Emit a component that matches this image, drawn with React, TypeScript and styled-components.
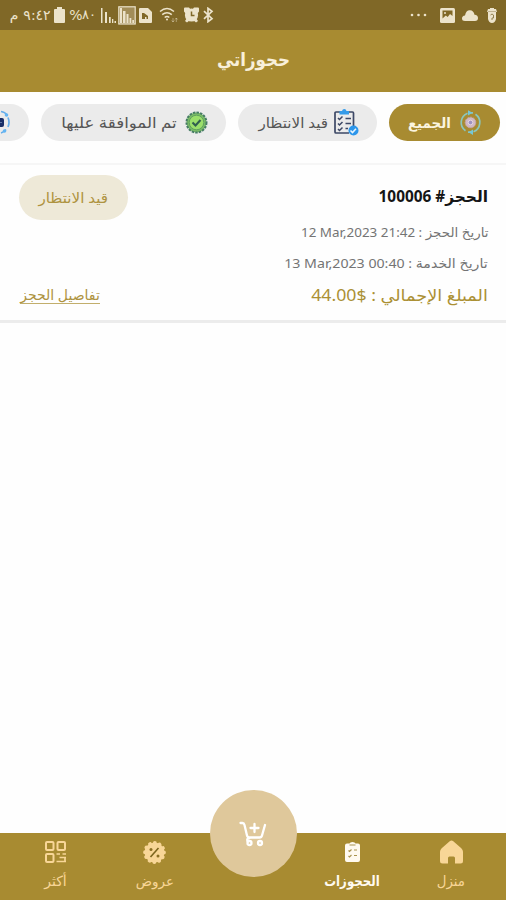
import React from "react";
import styled, { createGlobalStyle } from "styled-components";

const GlobalStyle = createGlobalStyle`
  * { box-sizing: border-box; }
  body { margin: 0; background: #fefefe; }
`;

const arabic = `"Noto Sans", "DejaVu Sans", sans-serif`;
const gold = "#a88b31";

const Screen = styled.div`
  display: flex;
  flex-direction: column;
  width: 506px;
  height: 900px;
  overflow: hidden;
  background: #fefefe;
  font-family: ${arabic};
  direction: rtl;
`;

const StatusBar = styled.header`
  display: flex;
  direction: ltr;
  justify-content: space-between;
  align-items: center;
  height: 30px;
  padding: 0 9px 0 9px;
  background: #806827;
  color: #ece3cb;
`;

const StatusGroup = styled.div`
  display: flex;
  align-items: center;
  height: 30px;
`;

const StatusItem = styled.span<{ $w: number; $gap?: number; $size?: number }>`
  display: flex;
  align-items: center;
  justify-content: center;
  flex: none;
  width: ${(p) => p.$w}px;
  margin-right: ${(p) => p.$gap ?? 0}px;
  font: ${(p) => p.$size ?? 13}px/20px "DejaVu Sans", sans-serif;
  white-space: nowrap;
`;

const TitleBar = styled.div`
  display: flex;
  justify-content: center;
  align-items: center;
  height: 62px;
  padding: 0 0 4px 2px;
  background: ${gold};
  color: #f8efda;
`;

const Label = styled.span<{ $size: number; $stretch?: number; $bold?: boolean }>`
  display: block;
  flex: none;
  white-space: nowrap;
  font-size: ${(p) => p.$size}px;
  font-weight: ${(p) => (p.$bold ? 700 : 400)};
  line-height: 1.4;
  transform: scaleX(${(p) => p.$stretch ?? 1});
  transform-origin: center;
`;

const StartLabel = styled(Label)`
  transform-origin: right center;
`;

const Filters = styled.nav`
  display: flex;
  flex: none;
  gap: 12px;
  height: 73px;
  padding: 12px 6px 0 0;
  border-bottom: 2px solid #f6f6f6;
`;

const Chip = styled.button<{ $w: number; $active?: boolean }>`
  display: flex;
  flex: none;
  align-items: center;
  justify-content: space-between;
  width: ${(p) => p.$w}px;
  height: 37px;
  padding: 0 18px;
  border: 0;
  border-radius: 19px;
  background: ${(p) => (p.$active ? gold : "#ebebeb")};
  color: ${(p) => (p.$active ? "#fbf4df" : "#565656")};
  font-family: ${arabic};
`;

const ChipText = styled.span<{ $w: number }>`
  display: flex;
  justify-content: center;
  flex: none;
  width: ${(p) => p.$w}px;
`;

const Booking = styled.article`
  display: flex;
  justify-content: space-between;
  flex: none;
  height: 158px;
  padding: 10px 18px 0 19px;
  border-bottom: 3px solid #ececec;
`;

const Details = styled.div`
  display: grid;
  grid-template-rows: 43px 29px 32px 32px;
  align-items: center;
  justify-items: start;
  color: #747474;
`;

const BookingNumber = styled(StartLabel)`
  color: #151515;
`;

const Total = styled(StartLabel)`
  color: #ab9034;
`;

const Actions = styled.div`
  display: flex;
  flex-direction: column;
  justify-content: space-between;
  align-items: flex-end;
  padding-bottom: 16px;
`;

const StateBadge = styled.div`
  display: flex;
  align-items: center;
  justify-content: center;
  width: 109px;
  height: 45px;
  border-radius: 23px;
  background: #eee9d8;
  color: #ae9340;
`;

const DetailLink = styled.a`
  display: flex;
  justify-content: center;
  align-items: center;
  width: 80px;
  height: 18px;
  margin-left: 1px;
  border-bottom: 1px solid #c2ae6c;
  color: #ae9340;
`;

const BottomBar = styled.nav`
  display: grid;
  grid-template-columns: 110px 88px 110px 87px 111px;
  height: 67px;
  margin-top: auto;
  background: ${gold};
`;

const Tab = styled.div<{ $active?: boolean }>`
  display: flex;
  flex-direction: column;
  align-items: center;
  padding-top: 7px;
  color: ${(p) => (p.$active ? "#fffaf0" : "#f8d697")};
`;

const TabIcon = styled.span`
  display: flex;
  height: 24px;
  align-items: center;
  margin-bottom: 7px;
`;

const CartButton = styled.button`
  display: flex;
  align-items: center;
  justify-content: center;
  justify-self: center;
  width: 87px;
  height: 87px;
  margin-top: -43px;
  padding: 0;
  border: 0;
  border-radius: 50%;
  background: #dfc89b;
  color: #fff;
`;

const Battery = () => (
  <svg width="11" height="16" viewBox="0 0 11 16" fill="currentColor"><path d="M3 0h5v2h2q1 0 1 1v12q0 1-1 1H1q-1 0-1-1V3q0-1 1-1h2z" /></svg>
);
const Signal = () => (
  <svg width="15" height="15" viewBox="0 0 15 15" fill="currentColor"><path d="M0 0h1.5v15H0zM4 4h2v11H4zM8 9h1.7v6H8zM11 11h1.3v4H11zM13.5 13H15v2h-1.5z" /></svg>
);
const BoxedSignal = () => (
  <svg width="18" height="19" viewBox="0 0 18 19" fill="currentColor">
    <rect x=".8" y=".8" width="16.4" height="17.2" fill="#a28d58" stroke="currentColor" strokeWidth="1.2" />
    <path d="M2 2h2v15H2zM5 5h2.5v12H5zM8.5 8h2v9h-2zM11.5 12h1.8v5h-1.8zM14.3 14H16v3h-1.7z" />
  </svg>
);
const Sim = () => (
  <svg width="13" height="15" viewBox="0 0 13 15"><path fill="currentColor" d="M1 0h8l4 4v10q0 1-1 1H1q-1 0-1-1V1q0-1 1-1z" /><path d="M3 11V5h2l4 3v3H7.500V9H6v2z" fill="#806827" /></svg>
);
const Wifi = () => (
  <svg width="20" height="16" viewBox="0 0 20 16" fill="none" stroke="currentColor" strokeWidth="1.5">
    <path d="M1 4.5q7-6 14 0M3.2 7.7q4.8-4 9.6 0M5.7 10.5q2.3-2 4.6 0" /><circle cx="8" cy="12.5" r="1" fill="currentColor" stroke="none" />
    <path d="M14 11v4m-1.3-1.5L14 15l1.3-1.5M17.3 15v-4m-1.2 1.5 1.2-1.5 1.3 1.5" strokeWidth=".7" opacity=".65" />
  </svg>
);
const Alarm = () => (
  <svg width="15" height="16" viewBox="0 0 15 16"><g fill="currentColor"><circle cx="7.5" cy="8" r="6.6" /><path d="M0 4.500V1.500Q0 .5 1 .5h4L7 3 2 7zM15 4.500V1.500Q15 .5 14 .5h-4L8 3l5 4zM1 14l2-3 3 2-3 2.500zM14 14l-2-3-3 2 3 2.500z" /></g><path d="M7.5 4.5v4H10.500" fill="none" stroke="#806827" strokeWidth="1.5" /></svg>
);
const Bluetooth = () => (
  <svg width="11" height="16" viewBox="0 0 11 16" fill="none" stroke="currentColor" strokeWidth="1.7"><path d="m1 4.2 8 7.5-4 3V1.3l4 3-8 7.5" /></svg>
);
const Dots = () => (
  <svg width="17" height="4" viewBox="0 0 17 4" fill="currentColor"><circle cx="2" cy="2" r="1.3" /><circle cx="8.5" cy="2" r="1.3" /><circle cx="15" cy="2" r="1.3" /></svg>
);
const Photo = () => (
  <svg width="15" height="15" viewBox="0 0 15 15"><rect width="15" height="15" rx="1.5" fill="currentColor" /><path d="M2.5 2.5h10V8L10 6 7.7 9 5.8 7.5l-3.3 3z" fill="#806827" /><circle cx="5" cy="5" r="1" fill="currentColor" /></svg>
);
const Cloud = () => (
  <svg width="16" height="11" viewBox="0 0 16 11" fill="currentColor"><path d="M3 11Q0 11 0 8.500Q0 6 3 5.600Q4 0 8 .2q3.500 0 4.500 4.500Q16 5 16 8q0 3-3 3z" /></svg>
);
const Shaker = () => (
  <svg width="10" height="15" viewBox="0 0 10 15"><path fill="currentColor" d="M3 0h4v1h2l1 3H9v7q-1 4-4 4t-4-4V4H0l1-3h2z" /><path d="M3.5 7q1.500-2 3 0v3H5v2" fill="none" stroke="#91804f" strokeWidth="1" /><path d="M1 3.500h8" stroke="#b5a67f" strokeWidth=".8" /></svg>
);

const CycleIcon = () => (
  <svg width="23" height="25" viewBox="0 0 23 25" fill="none" stroke="#8bc6bb" strokeWidth="1.7">
    <path d="M8.500 3.200A10 10 0 0 0 6.500 20.700M14.500 21.800A10 10 0 0 0 16.500 4.300" />
    <path d="M14 2.800h-4M9 22.200h4" />
    <path d="m9 .2 4.500 2.600L9 5.600zM14 19.400l-4.500 2.800L14 25z" fill="#76c7d5" stroke="none" />
    <circle cx="11.500" cy="12.500" r="5.300" fill="#d0b8c5" stroke="#c7a6a8" strokeWidth="1" strokeDasharray="2 1" />
    <circle cx="11.500" cy="12.500" r="2.300" fill="#9f93c2" stroke="#eee0e4" strokeWidth=".8" />
  </svg>
);
const ChecklistIcon = () => (
  <svg width="25" height="27" viewBox="0 0 25 27" fill="none">
    <path d="M6 3H2q-1 0-1 1v19q0 1 1 1h13M14 3h4.500q1 0 1 1v13" stroke="#3d4866" strokeWidth="1.700" />
    <path d="M5.500 2H8q.5-2 2.300-2T12.500 2H15v3.500H5.500z" fill="#349be9" />
    <path d="m4 9 1.500 1.500L8.500 7.500M4 14.500 5.500 16l3-3M4 20l1.500 1.500 3-3M11.500 9.500H17M11.500 14.500H17M11.500 19.500H14" stroke="#3d4866" strokeWidth="1.500" />
    <circle cx="19.500" cy="21.500" r="5" fill="#2c96eb" /><path d="m16.500 21.500 2 2 3.500-3.700" stroke="#e7f5ff" strokeWidth="1.600" />
  </svg>
);
const ApprovedIcon = () => (
  <svg width="23" height="23" viewBox="0 0 23 23" fill="none">
    <circle cx="11.500" cy="11.500" r="10" fill="#79bb66" stroke="#477c65" strokeWidth="2" strokeDasharray="2.500 1.100" />
    <circle cx="11.500" cy="11.500" r="7.300" fill="#9bdf6b" stroke="#5b9a5d" strokeWidth=".9" />
    <path d="m7.500 11.500 3 3 5-5.500" stroke="#315f4f" strokeWidth="2.100" />
  </svg>
);
const ProgressIcon = () => (
  <svg width="24" height="25" viewBox="0 0 24 25" fill="none">
    <path d="M14 1.500q4 .5 6 3.500M21 7.500q2 5 0 9.500M19 19.500q-2 2.500-5 3.500M10 1.500a11 11 0 0 0 0 22" stroke="#67aeea" strokeWidth="1.700" />
    <circle cx="19.500" cy="5" r="1.800" fill="#63b5f3" /><circle cx="17.500" cy="21" r="1.800" fill="#63b5f3" />
    <rect x="7" y="8" width="10" height="9" rx="2" fill="#182e67" /><path d="M13 12.500h2" stroke="#7289b5" strokeWidth=".8" />
  </svg>
);

const HomeIcon = () => (
  <svg width="23" height="24" viewBox="0 0 23 24" fill="currentColor"><path d="M9.700 1.200q1.800-1.600 3.600 0l8 7q1.700 1.500 1.700 3.500V21q0 2.500-2.500 2.500H15V18q0-1.500-1.500-1.500h-4Q8 16.500 8 18v5.500H2.500Q0 23.500 0 21v-9.300q0-2 1.700-3.500z" /></svg>
);
const ClipboardIcon = () => (
  <svg width="15" height="20" viewBox="0 0 15 20" fill="none">
    <path d="M2 1.500h2.500Q5 0 7.500 0t3 1.500H13q2 0 2 2V18q0 2-2 2H2q-2 0-2-2V3.500q0-2 2-2z" fill="currentColor" />
    <path d="M4.500 3h6M3.500 8.500l1 1 2-2M9 8h3M3.500 14l1 1 2-2M9 13.500h3" stroke="#a99450" strokeWidth="1.100" />
  </svg>
);
const OffersIcon = () => (
  <svg width="23" height="23" viewBox="0 0 23 23" fill="none">
    <circle cx="11.500" cy="11.500" r="9.900" fill="currentColor" /><circle cx="11.500" cy="11.500" r="9.500" stroke="currentColor" strokeWidth="3.800" strokeLinecap="round" strokeDasharray=".1 4.874" />
    <path d="m15.500 7-8 9" stroke="#7b641d" strokeWidth="1.600" /><circle cx="8" cy="8.500" r="1.500" fill="#8b6f23" /><circle cx="15" cy="15" r="1.500" fill="#8b6f23" />
  </svg>
);
const MoreIcon = () => (
  <svg width="21" height="22" viewBox="0 0 21 22" fill="none" stroke="currentColor" strokeWidth="2">
    <rect x="1" y="1" width="7.500" height="8" rx="1" /><rect x="12.500" y="1" width="7.500" height="8" rx="1" /><rect x="1" y="13" width="7.500" height="8" rx="1" />
    <path d="M11.500 13h3.500M17.500 13H21M14.500 16.500H21M11.500 20.500H21M20 16v5" strokeWidth="1.700" />
  </svg>
);
const CartIcon = () => (
  <svg width="28" height="26" viewBox="0 0 28 26" fill="none" stroke="currentColor" strokeWidth="2.300" strokeLinecap="round" strokeLinejoin="round">
    <path d="M1.500 2h2q1.500 0 2 2L8 14.500q.5 2 2.500 2h10q2 0 2.500-2L26 4M10.500 17q-3 .5-2 3M15.500 3v8M11.500 7h8" />
    <circle cx="10.500" cy="22" r="2" /><circle cx="21" cy="22" r="2" />
  </svg>
);

export default function App() {
  return (
    <Screen>
      <GlobalStyle />
      <StatusBar>
        <StatusGroup>
          <StatusItem $w={10} $gap={4} $size={14}>م</StatusItem>
          <StatusItem $w={28} $gap={3} $size={14}>٩:٤٢</StatusItem>
          <StatusItem $w={11} $gap={5}><Battery /></StatusItem>
          <StatusItem $w={12} $size={14}>%</StatusItem>
          <StatusItem $w={14} $gap={5} $size={13}>٨٠</StatusItem>
          <StatusItem $w={15} $gap={2}><Signal /></StatusItem>
          <StatusItem $w={18} $gap={3}><BoxedSignal /></StatusItem>
          <StatusItem $w={13} $gap={7}><Sim /></StatusItem>
          <StatusItem $w={20} $gap={5}><Wifi /></StatusItem>
          <StatusItem $w={15} $gap={4}><Alarm /></StatusItem>
          <StatusItem $w={11}><Bluetooth /></StatusItem>
        </StatusGroup>
        <StatusGroup>
          <StatusItem $w={17} $gap={13}><Dots /></StatusItem>
          <StatusItem $w={15} $gap={7}><Photo /></StatusItem>
          <StatusItem $w={16} $gap={9}><Cloud /></StatusItem>
          <StatusItem $w={10}><Shaker /></StatusItem>
        </StatusGroup>
      </StatusBar>
      <TitleBar><Label $size={19} $stretch={0.88} $bold>حجوزاتي</Label></TitleBar>
      <Filters>
        <Chip $w={111} $active><CycleIcon /><ChipText $w={44}><Label $size={14} $stretch={0.96} $bold>الجميع</Label></ChipText></Chip>
        <Chip $w={139}><ChecklistIcon /><ChipText $w={75}><Label $size={14} $stretch={1.08}>قيد الانتظار</Label></ChipText></Chip>
        <Chip $w={185}><ApprovedIcon /><ChipText $w={120}><Label $size={15} $stretch={1.11}>تم الموافقة عليها</Label></ChipText></Chip>
        <Chip $w={130}><ProgressIcon /></Chip>
      </Filters>
      <Booking>
        <Details>
          <BookingNumber $size={16} $stretch={0.96} $bold>الحجز# <bdi dir="ltr">100006</bdi></BookingNumber>
          <StartLabel $size={13} $stretch={1.033}>تاريخ الحجز : <bdi dir="ltr">12 Mar,2023 21:42</bdi></StartLabel>
          <StartLabel $size={13} $stretch={1.09}>تاريخ الخدمة : <bdi dir="ltr">13 Mar,2023 00:40</bdi></StartLabel>
          <Total $size={16} $stretch={1.105}>المبلغ الإجمالي : <bdi dir="ltr">44.00$</bdi></Total>
        </Details>
        <Actions>
          <StateBadge><Label $size={14} $stretch={1.08}>قيد الانتظار</Label></StateBadge>
          <DetailLink><Label $size={14}>تفاصيل الحجز</Label></DetailLink>
        </Actions>
      </Booking>
      <BottomBar>
        <Tab><TabIcon><HomeIcon /></TabIcon><Label $size={14} $stretch={0.95}>منزل</Label></Tab>
        <Tab $active><TabIcon><ClipboardIcon /></TabIcon><Label $size={14} $stretch={0.84} $bold>الحجوزات</Label></Tab>
        <CartButton aria-label="السلة"><CartIcon /></CartButton>
        <Tab><TabIcon><OffersIcon /></TabIcon><Label $size={14} $stretch={0.96}>عروض</Label></Tab>
        <Tab><TabIcon><MoreIcon /></TabIcon><Label $size={14}>أكثر</Label></Tab>
      </BottomBar>
    </Screen>
  );
}
